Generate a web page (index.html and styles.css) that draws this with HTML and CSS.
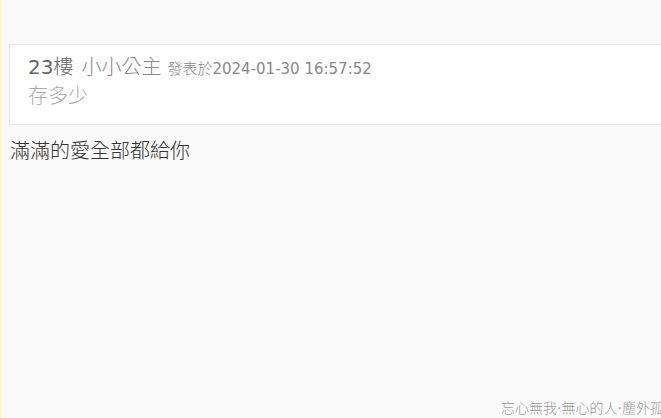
FILE: index.html
```html
<!DOCTYPE html>
<html lang="zh-Hant">
<head>
<meta charset="utf-8">
<link rel="stylesheet" href="styles.css">
</head>
<body>
<div class="page">
  <div class="reply">
    <div class="reply-head">
      <span class="floor"><span class="num">23</span>樓</span>
      <span class="author">小小公主</span>
      <span class="time">發表於<span class="num">2024-01-30 16:57:52</span></span>
    </div>
    <div class="reply-text">存多少</div>
  </div>
  <div class="answer">滿滿的愛全部都給你</div>
  <div class="footer">忘心無我<span class="num">·</span>無心的人<span class="num">·</span>塵外孤</div>
</div>
</body>
</html>
```
FILE: styles.css
```css
html, body {
  margin: 0;
  padding: 0;
  height: 100%;
  overflow: hidden;
}
body {
  background: #fafafa;
  font-family: "DejaVu Sans", "Noto Sans CJK TC", sans-serif;
  font-weight: 300;
  border-left: 2px solid #fffbc8;
  box-sizing: border-box;
}
.num {
  font-weight: 400;
}
.page {
  position: relative;
  height: 418px;
  padding-top: 44px;
  padding-left: 7px;
  box-sizing: border-box;
}
.reply {
  background: #fff;
  border: 1px solid #e6e6e6;
  border-right: none;
  height: 81px;
  box-sizing: border-box;
  padding: 8px 0 0 18px;
}
.reply-head {
  display: flex;
  align-items: baseline;
  line-height: 28px;
  white-space: nowrap;
}
.floor {
  font-size: 20px;
  color: #666;
}
.author {
  font-size: 20px;
  margin-left: 8px;
  color: #888;
}
.time {
  font-size: 15px;
  margin-left: 6px;
  color: #888;
}
.reply-text {
  font-size: 20px;
  color: #aaa;
  line-height: 26px;
}
.answer {
  margin-top: 13px;
  margin-left: 1px;
  font-size: 20px;
  color: #333;
  line-height: 26px;
}
.footer {
  position: absolute;
  left: 499px;
  bottom: 0;
  font-size: 14px;
  color: #999;
  line-height: 20px;
  white-space: nowrap;
}
```
